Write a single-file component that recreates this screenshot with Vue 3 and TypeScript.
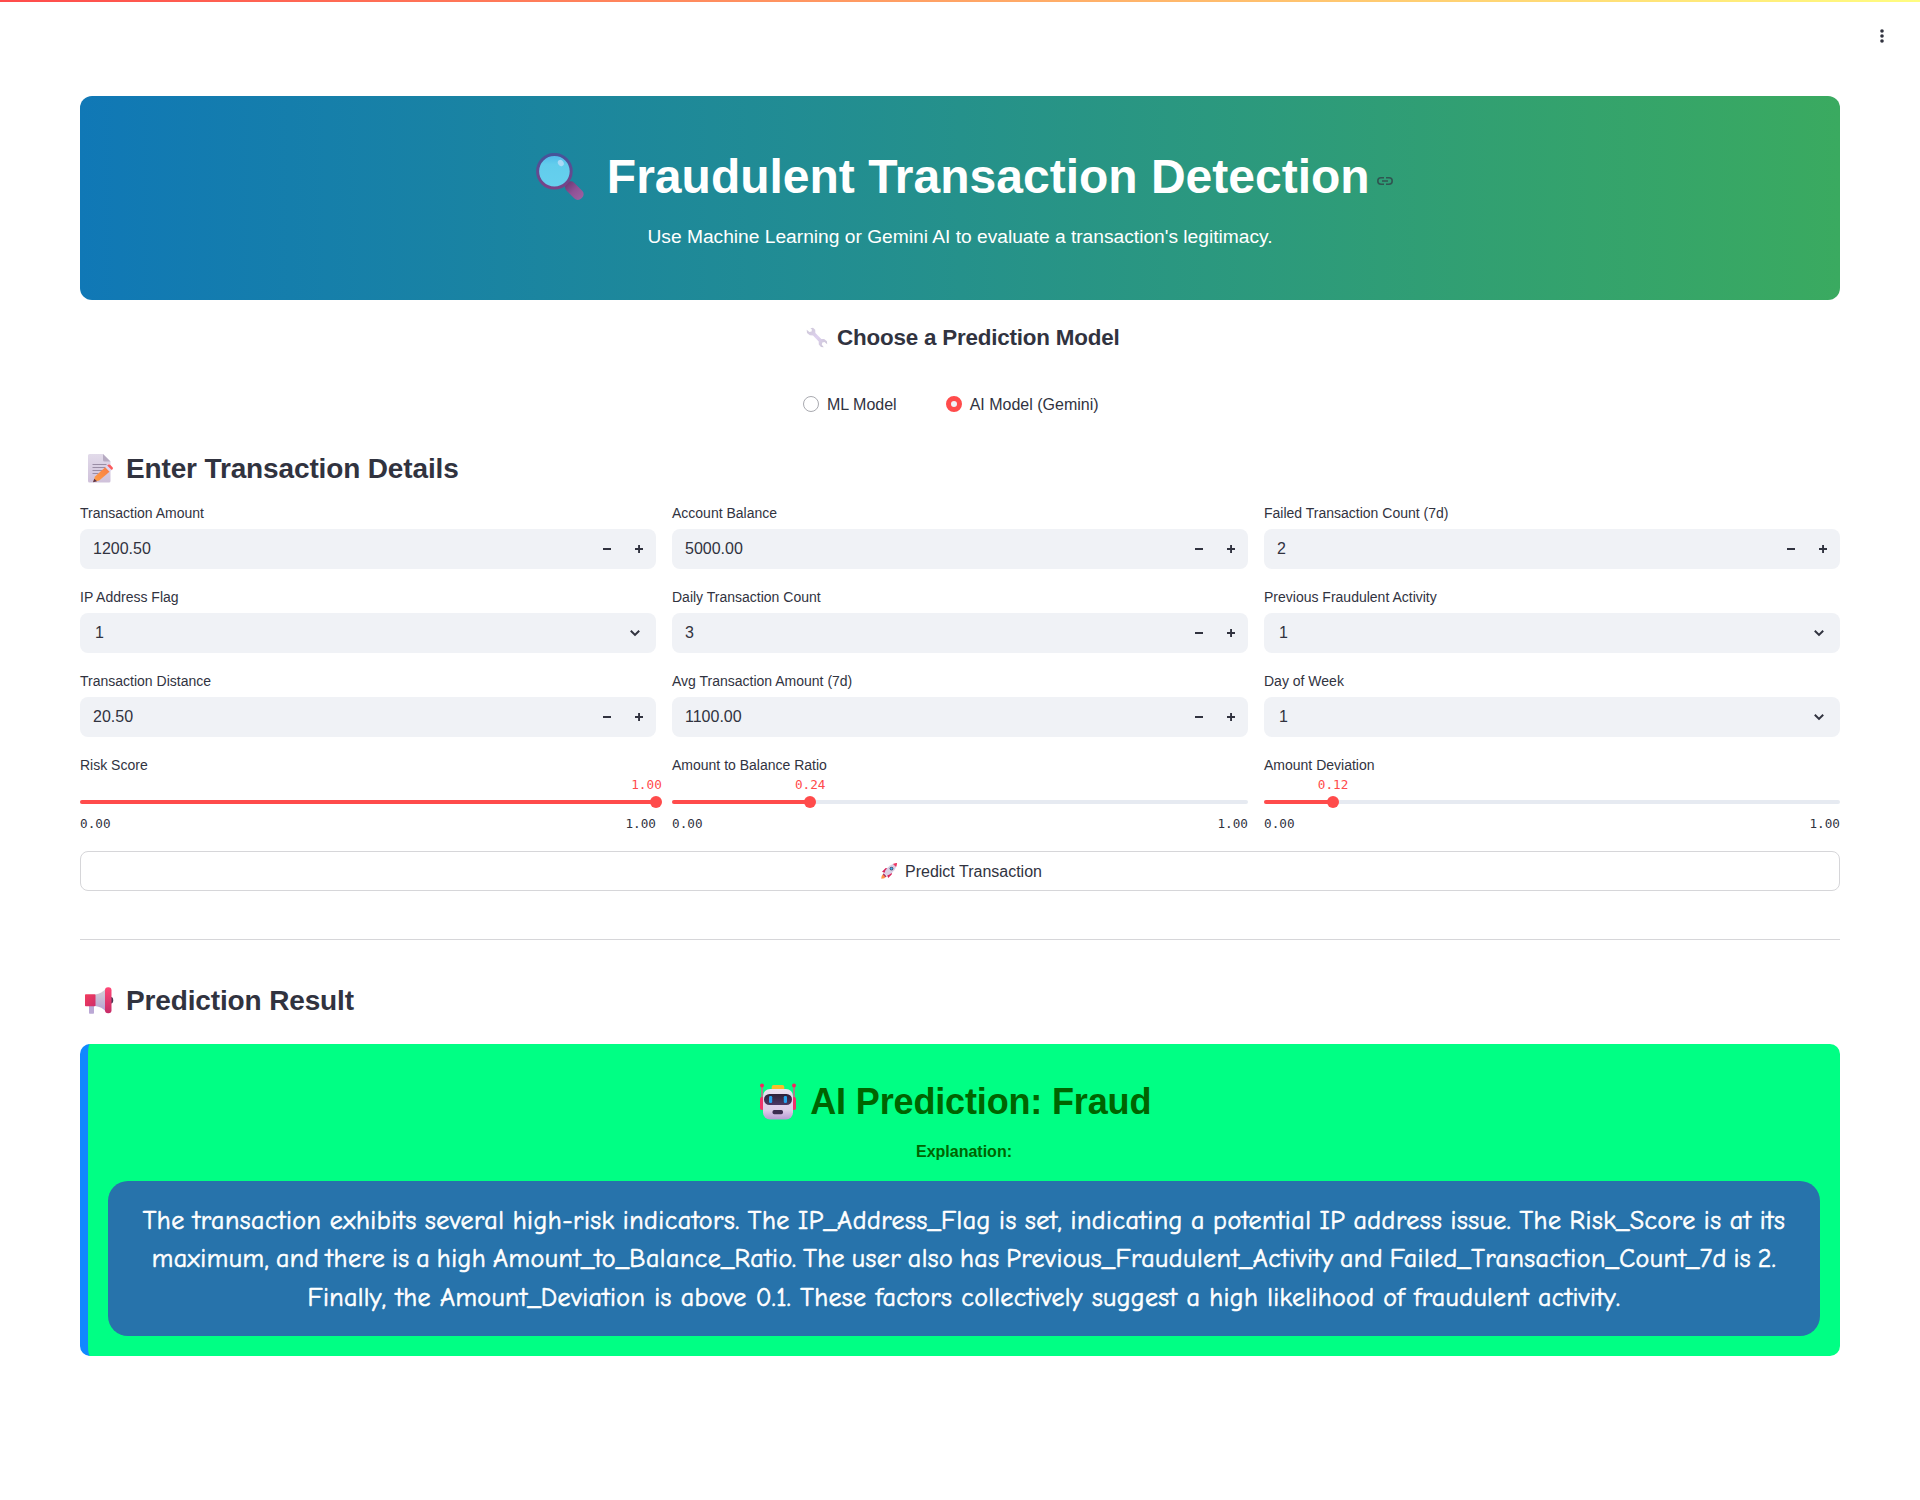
<script setup lang="ts">
interface Field {
  label: string
  value: string
  kind: 'number' | 'select'
}
interface Slider {
  label: string
  value: string
  percent: number
}

const fields: Field[] = [
  { label: 'Transaction Amount', value: '1200.50', kind: 'number' },
  { label: 'Account Balance', value: '5000.00', kind: 'number' },
  { label: 'Failed Transaction Count (7d)', value: '2', kind: 'number' },
  { label: 'IP Address Flag', value: '1', kind: 'select' },
  { label: 'Daily Transaction Count', value: '3', kind: 'number' },
  { label: 'Previous Fraudulent Activity', value: '1', kind: 'select' },
  { label: 'Transaction Distance', value: '20.50', kind: 'number' },
  { label: 'Avg Transaction Amount (7d)', value: '1100.00', kind: 'number' },
  { label: 'Day of Week', value: '1', kind: 'select' },
]

const sliders: Slider[] = [
  { label: 'Risk Score', value: '1.00', percent: 100 },
  { label: 'Amount to Balance Ratio', value: '0.24', percent: 24 },
  { label: 'Amount Deviation', value: '0.12', percent: 12 },
]
</script>

<template>
  <div class="app">
    <header class="topbar">
      <svg class="menu" width="8" height="16" viewBox="0 0 8 16" fill="#31333f">
        <circle cx="4" cy="3" r="1.8" /><circle cx="4" cy="8" r="1.8" /><circle cx="4" cy="13" r="1.8" />
      </svg>
    </header>

    <main class="content">
      <section class="banner">
        <h1 class="title">
          <svg class="title-icon" width="48" height="48" viewBox="0 0 48 48">
            <defs>
              <linearGradient id="ring" x1="0" y1="0" x2="0" y2="1">
                <stop offset="0" stop-color="#45549a" /><stop offset="1" stop-color="#7b4287" />
              </linearGradient>
              <linearGradient id="grip" x1="0" y1="0" x2="1" y2="0">
                <stop offset="0" stop-color="#6d3c76" /><stop offset=".5" stop-color="#8f5296" /><stop offset="1" stop-color="#9c5fa0" />
              </linearGradient>
              <linearGradient id="glass" x1="0" y1="0" x2="0" y2="1">
                <stop offset="0" stop-color="#4fb9ea" /><stop offset=".3" stop-color="#62cdec" /><stop offset="1" stop-color="#66d0ee" />
              </linearGradient>
            </defs>
            <rect x="27.800" y="32.100" width="21" height="11" rx="4.800" transform="rotate(45 38.300 37.600)" fill="url(#grip)" />
            <circle cx="18.4" cy="18.2" r="16.8" fill="url(#glass)" stroke="url(#ring)" stroke-width="3" />
            <ellipse cx="24.8" cy="10" rx="2.8" ry="3.3" transform="rotate(-35 24.8 10)" fill="#a9d9f6" />
          </svg>
          <span>Fraudulent Transaction Detection</span>
          <svg class="link" width="16" height="8" viewBox="0 0 16 8" fill="none" stroke="#31333f" stroke-opacity=".68" stroke-width="1.6">
            <path d="M7 .8H4a3.200 3.200 0 0 0 0 6.400h3M9 .8h3a3.200 3.200 0 0 1 0 6.400H9M5 4h6" />
          </svg>
        </h1>
        <p class="subtitle">Use Machine Learning or Gemini AI to evaluate a transaction's legitimacy.</p>
      </section>

      <h3 class="choose">
        <svg width="22" height="22" viewBox="0 0 22 22">
          <defs>
            <linearGradient id="steel" x1="0" y1="0" x2="1" y2="1">
              <stop offset="0" stop-color="#cdc8d6" /><stop offset=".5" stop-color="#ded1ef" /><stop offset="1" stop-color="#c9c4d2" />
            </linearGradient>
          </defs>
          <path d="M4.4 1.2 7 .8l2.2 2 .2 3.2 5.9 6.1 2.8-.1 2.8 2.2.3 3-2.7-2.1-2.2.5-.5 2.2 2 2.4-2.8-.1-2.2-2.5-.1-3L7 8.4l-3.2-.1L1 6 .7 2.7l2.7 2.3 2.2-.5.3-1.9z" fill="url(#steel)" />
        </svg>
        <span>Choose a Prediction Model</span>
      </h3>

      <div class="radios">
        <label class="radio"><span class="dot"></span><span class="text">ML Model</span></label>
        <label class="radio"><span class="dot on"></span><span class="text">AI Model (Gemini)</span></label>
      </div>

      <h2 class="heading details">
        <svg width="26" height="29" viewBox="0 0 26 29">
          <defs>
            <linearGradient id="paper" x1="0" y1="0" x2="0" y2="1">
              <stop offset="0" stop-color="#e2dbea" /><stop offset="1" stop-color="#cfc1da" />
            </linearGradient>
            <linearGradient id="pencil" x1="1" y1="0" x2="0" y2="1">
              <stop offset="0" stop-color="#f77a45" /><stop offset="1" stop-color="#ffa044" />
            </linearGradient>
          </defs>
          <path d="M1.5 0H15l7.5 7.5V27a1.5 1.5 0 0 1-1.500 1.500H1.500A1.500 1.500 0 0 1 0 27V1.500A1.500 1.500 0 0 1 1.500 0z" fill="url(#paper)" />
          <path d="M15 0v6a1.500 1.500 0 0 0 1.500 1.500h6z" fill="#b7abc2" />
          <path d="M4.500 10.500h14M4.500 13.500h14M4.500 16.500h10M4.500 19.500h6" stroke="#998da5" stroke-width="1.100" />
          <path d="M7 22.500 17.500 13l4.300 4.500-10.600 9L5.200 28z" fill="url(#pencil)" />
          <path d="M6.300 24.800 5 28.300l4-1z" fill="#55304b" />
          <path d="m17.200 13.300 2-1.900 4.500 4.600-2.100 1.800z" fill="#dfd5ee" />
          <path d="m19.200 11.400 1.100-.6c.8-.5 1.500-.3 2.100.3l2.100 2.200c.6.7.6 1.400 0 2l-.8.700z" fill="#fb5c5d" />
        </svg>
        <span>Enter Transaction Details</span>
      </h2>

      <div class="grid">
        <div v-for="f in fields" :key="f.label" class="field">
          <div class="label">{{ f.label }}</div>
          <div class="input" :class="f.kind">
            <span class="val">{{ f.value }}</span>
            <svg v-if="f.kind === 'number'" width="40" height="10" viewBox="0 0 40 10" fill="#31333f">
              <path d="M0 4.100h8v1.900H0zM32 4.100h3.100V1h1.900v3.100h3v1.900h-3V9h-1.900V6H32z" />
            </svg>
            <svg v-else width="10" height="8" viewBox="0 0 10 8" fill="none" stroke="#31333f" stroke-width="2">
              <path d="M.8 1.700 5 5.900l4.200-4.200" />
            </svg>
          </div>
        </div>

        <div v-for="s in sliders" :key="s.label" class="field">
          <div class="label">{{ s.label }}</div>
          <div class="slider">
            <div class="now"><span :style="{ left: s.percent === 100 ? 'calc(100% - 9.500px)' : s.percent + '%' }">{{ s.value }}</span></div>
            <div class="track">
              <div class="filled" :style="{ width: s.percent + '%' }"><i class="thumb"></i></div>
            </div>
            <div class="range"><span>0.00</span><span>1.00</span></div>
          </div>
        </div>
      </div>

      <button class="predict">
        <svg width="18" height="18" viewBox="0 0 18 18">
          <path d="M2 9.800 5.700 6l3 .5-3.800 4.600zM8.200 16l3.700-3.800-.4-3L7 13z" fill="#d9265d" />
          <path d="M1.300 16.700c0-2.400.8-4.300 2.500-4.700l2.200 2.200c-.4 1.700-2.300 2.500-4.700 2.500z" fill="#ff9348" />
          <path d="M4.200 11.400C5.600 7.300 8.600 3.500 13.300 1.800l2.900 2.900c-1.700 4.700-5.500 7.700-9.600 9.100z" fill="#d9d0e5" />
          <path d="M13 1.900c1.500-.7 2.900-.9 4-.9 0 1.200-.2 2.600-.9 4z" fill="#ee3762" />
          <circle cx="11.500" cy="6.600" r="1.900" fill="#47506f" /><circle cx="11.500" cy="6.600" r="1.100" fill="#41b5ed" />
          <path d="m3.600 11.300 3.100 3.100-1.200.8-2.700-2.700z" fill="#a8326b" />
        </svg>
        <span class="text">Predict Transaction</span>
      </button>

      <div class="divider"></div>

      <h2 class="heading result-heading">
        <svg width="29" height="27" viewBox="0 0 29 27">
          <defs>
            <linearGradient id="horn" x1="0" y1="0" x2="0" y2="1">
              <stop offset="0" stop-color="#d5d3d6" /><stop offset="1" stop-color="#b6a0d3" />
            </linearGradient>
            <linearGradient id="pink" x1="0" y1="0" x2="0" y2="1">
              <stop offset="0" stop-color="#ff4776" /><stop offset="1" stop-color="#c62c68" />
            </linearGradient>
            <linearGradient id="body" x1="0" y1="0" x2="1" y2="1">
              <stop offset="0" stop-color="#f23d5d" /><stop offset="1" stop-color="#cf2c69" />
            </linearGradient>
          </defs>
          <ellipse cx="26" cy="13.300" rx="2.200" ry="3.300" fill="#4b3a56" />
          <path d="M4 18h5v8a.8.8 0 0 1-.8.800H4.800A.8.800 0 0 1 4 26z" fill="#bba8d5" />
          <path d="M10 7.500C15 7 18 4.500 21 1.500v23c-3-3-6-5-11-5.500z" fill="url(#horn)" />
          <rect x="0" y="7.300" width="10.500" height="12" rx=".8" fill="url(#body)" />
          <rect x="20" y=".3" width="6.500" height="26" rx="3" fill="url(#pink)" />
        </svg>
        <span>Prediction Result</span>
      </h2>

      <section class="result">
        <h2 class="verdict">
          <svg width="36" height="37" viewBox="0 0 36 37">
            <defs>
              <linearGradient id="face" x1="0" y1="0" x2="0" y2="1">
                <stop offset="0" stop-color="#eadff0" /><stop offset=".7" stop-color="#dccbe8" /><stop offset="1" stop-color="#b69ad2" />
              </linearGradient>
              <linearGradient id="visor" x1="0" y1="0" x2="0" y2="1">
                <stop offset="0" stop-color="#2c2038" /><stop offset="1" stop-color="#4a3864" />
              </linearGradient>
            </defs>
            <path d="M2 3v14M34 3v14" stroke="#d85c88" stroke-width="1.500" />
            <circle cx="2" cy="2.500" r="2" fill="#f5265e" /><circle cx="34" cy="2.500" r="2" fill="#f5265e" />
            <rect x="0" y="14" width="4" height="13" rx="1.800" fill="#f1316b" /><rect x="32" y="14" width="4" height="13" rx="1.800" fill="#f1316b" />
            <rect x="11.700" y="2" width="12.600" height="6" rx="2" fill="#f9bd29" />
            <rect x="3" y="6" width="30" height="30.500" rx="7" fill="url(#face)" />
            <rect x="4" y="11" width="28" height="11" rx="5.500" fill="url(#visor)" />
            <rect x="9" y="13" width="3.200" height="7" rx="1.300" fill="#26a2ee" /><rect x="23.800" y="13" width="3.200" height="7" rx="1.300" fill="#26a2ee" />
            <rect x="12.500" y="27" width="10.500" height="4.300" rx="1.700" fill="#3b2c50" />
          </svg>
          <span>AI Prediction: Fraud</span>
        </h2>
        <div class="explain-title">Explanation:</div>
        <p class="explain">
          <span class="l1">The transaction exhibits several high-risk indicators. The IP_Address_Flag is set, indicating a potential IP address issue. The Risk_Score is at its</span>
          <span class="l2">maximum, and there is a high Amount_to_Balance_Ratio. The user also has Previous_Fraudulent_Activity and Failed_Transaction_Count_7d is 2.</span>
          <span class="l3">Finally, the Amount_Deviation is above 0.1. These factors collectively suggest a high likelihood of fraudulent activity.</span>
        </p>
      </section>
    </main>
  </div>
</template>

<style>
html, body { margin: 0; background: #fff; }
</style>

<style scoped>
.app {
  box-sizing: border-box;
  width: 1920px;
  height: 1500px;
  overflow: hidden;
  background: #fff;
  color: #31333f;
  font-family: "Liberation Sans", Arial, sans-serif;
  font-size: 16px;
}
.app svg { flex: none; display: block; }
h1, h2, h3, p { margin: 0; }
.topbar {
  box-sizing: border-box;
  height: 96px;
  border-top: 2px solid;
  border-image: linear-gradient(90deg, #ff4b4b, #fffd80) 1;
  display: flex;
  justify-content: flex-end;
  padding: 26px 34px 0 0;
  border-left: 0; border-right: 0; border-bottom: 0;
}
.content { margin: 0 80px; display: flex; flex-direction: column; }

.banner {
  box-sizing: border-box;
  height: 204px;
  padding-top: 50px;
  border-radius: 12px;
  background: linear-gradient(to right, #1078b6, #3aaa60);
  color: #fff;
}
.title {
  height: 60px;
  line-height: 60px;
  font-size: 48px;
  display: flex;
  justify-content: center;
  white-space: nowrap;
  padding-left: 9px;
}
.title span, .choose span, .heading span, .verdict span { margin-top: 1px; }
.title-icon { margin: 7px 22.500px 0 0; }
.link { margin: 31px 0 0 7px; }
.subtitle {
  margin-top: 16px;
  height: 30px;
  line-height: 30px;
  font-size: 19.200px;
  text-align: center;
}
.choose {
  margin-top: 23px;
  height: 28px;
  line-height: 28px;
  font-size: 22.400px;
  letter-spacing: -0.2px;
  display: flex;
  justify-content: center;
  padding-left: 5px;
}
.choose svg { margin: 4px 9.500px 0 0; }

.radios {
  margin-top: 41px;
  height: 24px;
  padding-left: 723px;
  display: flex;
  gap: 49px;
}
.radio { display: flex; align-items: center; gap: 8px; line-height: 24px; }
.text { padding-top: 2px; }
.dot {
  box-sizing: border-box;
  width: 16px;
  height: 16px;
  border: 1px solid #a9aab0;
  border-radius: 50%;
}
.dot.on { border: 5px solid #ff4b4b; background: #f0f2f6; }

.heading {
  height: 36px;
  line-height: 36px;
  font-size: 28px;
  letter-spacing: -0.14px;
  display: flex;
}
.details { margin-top: 34px; padding-left: 8px; }
.details svg { margin: 4px 12px 0 0; }

.grid {
  margin-top: 17px;
  display: grid;
  grid-template-columns: repeat(3, 1fr);
  gap: 18px 16px;
}
.label { height: 20px; line-height: 20px; font-size: 14px; white-space: nowrap; }
.input {
  margin-top: 6px;
  height: 40px;
  border-radius: 8px;
  background: #f0f2f6;
  display: flex;
  align-items: center;
  justify-content: space-between;
  box-sizing: border-box;
  padding: 0 13px;
}
.input.select { padding: 0 16px 0 15px; }
.val { line-height: 40px; }

.now {
  position: relative;
  height: 19px;
  line-height: 19px;
  color: #ff4b4b;
}
.now span { position: absolute; top: 0; transform: translateX(-50%); }
.now, .range { font-family: Consolas, "DejaVu Sans Mono", monospace; font-size: 12.700px; }
.track { margin-top: 6px; height: 4px; border-radius: 4px; background: #e6eaf1; }
.filled { position: relative; height: 4px; border-radius: 4px; background: #ff4b4b; }
.thumb {
  position: absolute;
  right: -6px;
  top: -4px;
  width: 12px;
  height: 12px;
  border-radius: 50%;
  background: #ff4b4b;
}
.range { margin-top: 10px; height: 20px; line-height: 20px; display: flex; justify-content: space-between; }

.predict {
  margin: 17px 0 0;
  height: 40px;
  padding: 0 0 0 2px;
  border: 1px solid #d6d6d9;
  border-radius: 8px;
  background: #fff;
  color: inherit;
  font: inherit;
  display: flex;
  align-items: center;
  justify-content: center;
  gap: 7px;
}
.divider { margin-top: 48px; height: 1px; background: #d6d6d9; }
.result-heading { margin-top: 42px; padding-left: 5px; }
.result-heading svg { margin: 5px 12px 0 0; }

.result {
  margin-top: 26px;
  height: 312px;
  box-sizing: border-box;
  border-left: 8px solid #1188ff;
  border-radius: 10px;
  background: #00ff84;
  padding: 35px 20px 20px;
  text-align: center;
  color: #006400;
}
.verdict {
  height: 44px;
  line-height: 44px;
  font-size: 36px;
  letter-spacing: -0.15px;
  display: flex;
  justify-content: center;
  padding-right: 17px;
}
.verdict svg { margin: 4px 14.500px 0 0; }
.explain-title { margin-top: 17px; height: 24px; line-height: 24px; font-weight: 700; }
.explain {
  margin-top: 17px;
  height: 155px;
  box-sizing: border-box;
  padding: 21px 20px 19px;
  border-radius: 20px;
  background: #2773ab;
  color: #fff;
  font-family: "Comic Sans MS", "Comic Neue", "Open Sans", sans-serif;
  font-size: 26px;
  line-height: 38.400px;
  -webkit-text-stroke: 0.6px #fff;
}
.explain span { display: block; white-space: nowrap; }
.l1 { letter-spacing: 0.49px; word-spacing: -1px; }
.l2 { letter-spacing: 0.48px; word-spacing: -2.500px; }
.l3 { letter-spacing: 0.36px; }
</style>
